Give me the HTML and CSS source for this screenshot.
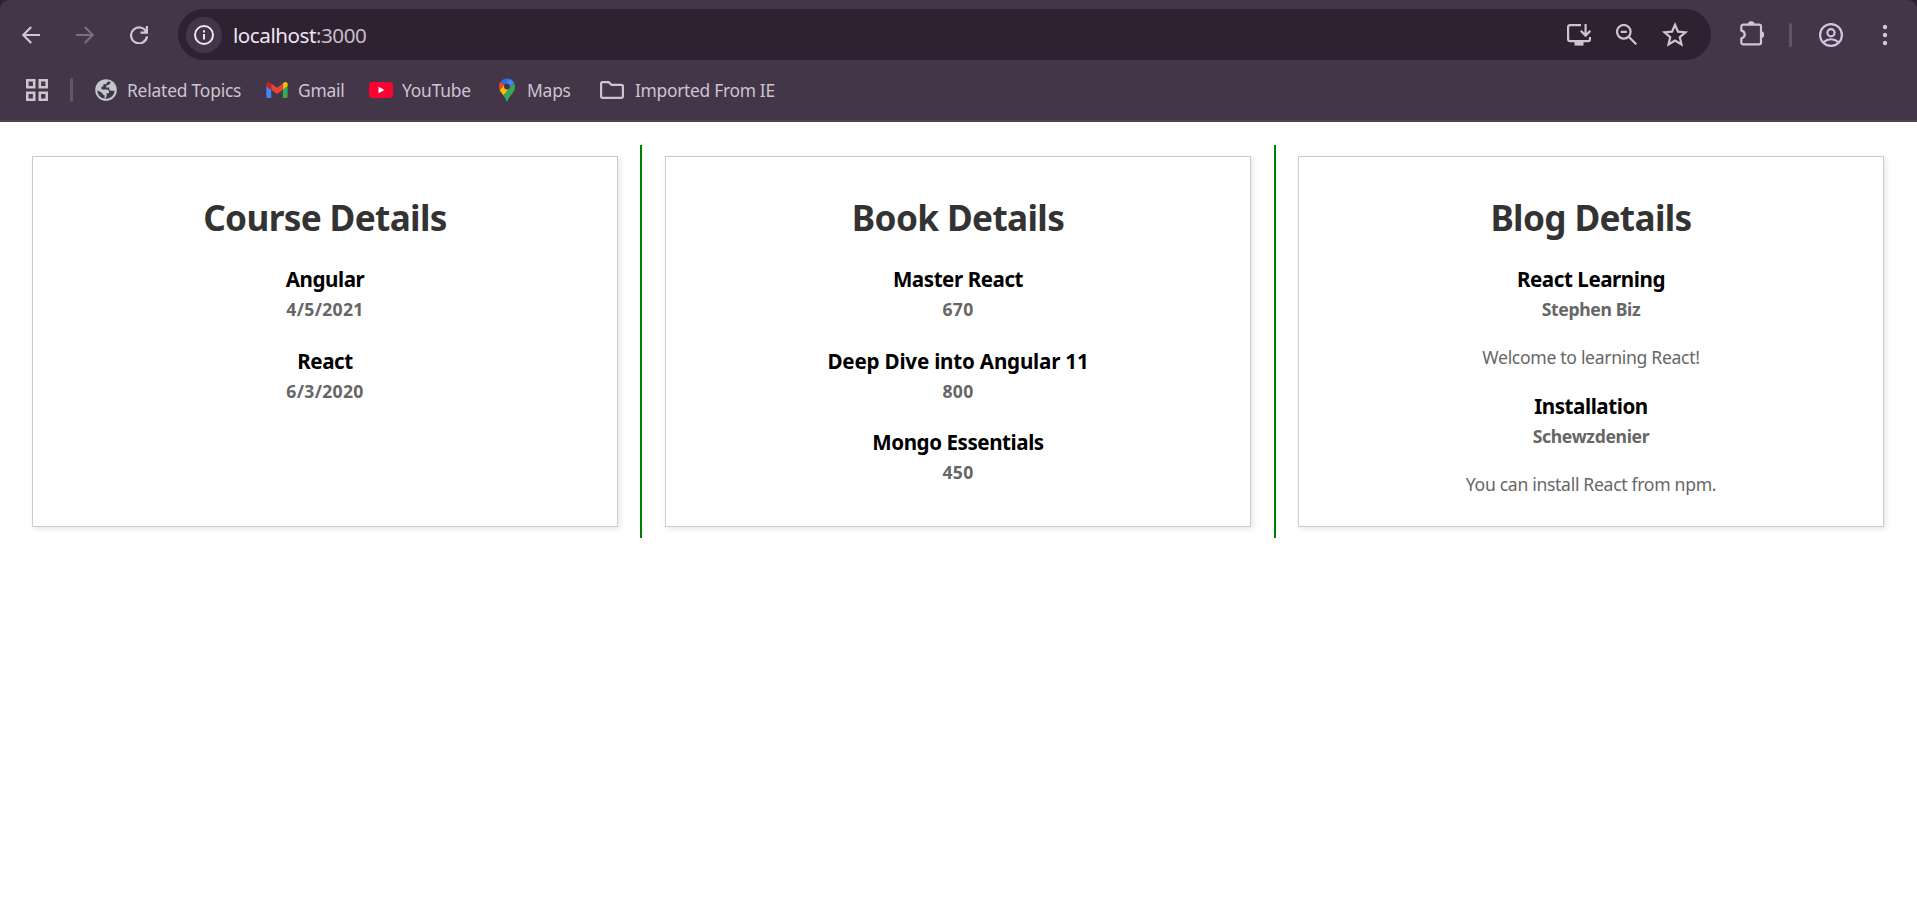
FILE: index.html
```html
<!DOCTYPE html>
<html lang="en">
<head>
<meta charset="utf-8">
<title>localhost:3000</title>
<link rel="stylesheet" href="styles.css">
</head>
<body>
<header class="browser">
  <div class="toolbar">
    <svg class="icon back" viewBox="0 0 18 18"><path d="M18 9H1.6M9.2 .9L1.2 9l8 8.1"/></svg>
    <svg class="icon forward" viewBox="0 0 18 18"><path d="M0 9h16.4M8.8 .9l8 8.1-8 8.1"/></svg>
    <svg class="icon reload" viewBox="0 0 18 18"><path d="M16.9 0v6.6h-6.4M16.3 6A8 8 0 1 0 17 10.4"/></svg>
    <div class="omnibox">
      <span class="site-info"><svg class="icon info" viewBox="0 0 20 20"><circle cx="10" cy="10" r="9"/><path d="M10 9v5.6M10 5.2v2.2"/></svg></span>
      <span class="url">localhost<span class="port">:3000</span></span>
      <svg class="icon install" viewBox="0 0 24 22"><path d="M14 1.2H3A2 2 0 0 0 1.1 3v12.2A2 2 0 0 0 3 17.1h18.2a1.9 1.9 0 0 0 1.8-1.9V13M18.6 0v11M13.8 6.8l4.8 4.8 4.8-4.8"/><path class="solid" d="M7.5 17h9v4.6h-9z"/></svg>
      <svg class="icon zoom" viewBox="0 0 21 21"><circle cx="7.8" cy="7.8" r="6.8"/><path d="M12.7 12.7l7.6 7.6M4.8 7.8h6"/></svg>
      <svg class="icon star" viewBox="0 0 24 24"><path d="M12 3.2l2.55 5.9 6.4.55-4.85 4.2 1.45 6.25L12 16.8l-5.55 3.3 1.45-6.25-4.85-4.2 6.4-.55z"/></svg>
    </div>
    <svg class="icon puzzle" viewBox="0 0 24 25"><path d="M3.2 3.7h15.9a1.9 1.9 0 0 1 1.9 1.9v15.9a1.9 1.9 0 0 1-1.9 1.9H3.2a1.9 1.9 0 0 1-1.9-1.9v-3.900c4.600-1.600 4.600-6.600 0-8.200V5.600a1.900 1.900 0 0 1 1.900-1.900z"/><path class="solid" d="M7.900 3.500a3.300 3.300 0 0 1 6.600 0zM21 10.300a3.300 3.300 0 0 1 0 6.600z"/></svg>
    <span class="divider toolbar-divider"></span>
    <svg class="icon profile" viewBox="0 0 24 24"><circle cx="12" cy="12" r="10.900"/><circle cx="12" cy="9.800" r="3.600"/><path d="M4.300 19.300c4.700-3.900 10.700-3.900 15.400 0"/></svg>
    <svg class="icon dots" viewBox="0 0 6 22"><circle cx="3" cy="3" r="2.200"/><circle cx="3" cy="11" r="2.200"/><circle cx="3" cy="19" r="2.200"/></svg>
  </div>
  <nav class="bookmarks">
    <svg class="icon apps" viewBox="0 0 22 22"><path d="M1.300 1.300h6.900v6.900H1.300zM13.800 1.300h6.900v6.900h-6.900zM1.300 13.800h6.900v6.900H1.300zM13.800 13.800h6.900v6.900h-6.900z"/></svg>
    <span class="divider bookmark-divider"></span>
    <svg class="globe" viewBox="0 0 22 22"><circle class="globe-disc" cx="11" cy="11" r="10.800"/><path class="globe-sea" d="M12.800 2.400L11 5.200H8.300v2.300l-1.800.3v2.700h5.300c1.300 0 2.200 1 2.200 2.200v1.500h-2.400v3.200l-1.500 2.200c3.500.4 5.800-1 7-2.300 1.500-1.500 2.300-3.600 2.400-5.600h-3.200c-1.300 0-2.100-.8-2.100-2V8.500h-3V6.800l3.400-1.600 1.200-2.100zM2.300 11.300c0 3.200 1.700 6 4.200 7.400l3.100.7v-3.200c-1.300 0-2.300-.8-2.300-2.100z"/></svg>
    <span class="label topics">Related Topics</span>
    <svg class="gmail" viewBox="52 42 88 66"><path fill="#4285f4" d="M58 108h14V74L52 59v43c0 3.320 2.690 6 6 6"/><path fill="#34a853" d="M120 108h14c3.320 0 6-2.690 6-6V59l-20 15"/><path fill="#fbbc04" d="M120 48v26l20-15v-8c0-7.420-8.470-11.650-14.400-7.200"/><path fill="#ea4335" d="M72 74V48l24 18 24-18v26L96 92"/><path fill="#c5221f" d="M52 51v8l20 15V48l-5.600-4.200c-5.940-4.450-14.400-.22-14.400 7.200"/></svg>
    <span class="label mail">Gmail</span>
    <svg class="youtube" viewBox="0 0 24 16"><rect width="24" height="16" rx="3.500" fill="#ff0033"/><path fill="#fff" d="M9.500 4.800l6 3.200-6 3.200z"/></svg>
    <span class="label video">YouTube</span>
    <svg class="maps" viewBox="0 0 92.300 132.300"><path fill="#1a73e8" d="M60.200 2.200C55.800.8 51 0 46.100 0 32 0 19.300 6.400 10.800 16.500l21.800 18.300z"/><path fill="#ea4335" d="M10.800 16.500C4.100 24.500 0 34.900 0 46.100c0 8.700 1.700 15.700 4.600 22l28-33.300z"/><path fill="#4285f4" d="M46.200 28.500c9.800 0 17.700 7.900 17.700 17.700 0 4.300-1.600 8.300-4.200 11.400 0 0 13.900-16.600 27.500-32.700-5.600-10.800-15.300-19-27-22.700L32.600 34.800c3.300-3.800 8.100-6.300 13.600-6.300"/><path fill="#fbbc04" d="M46.200 63.800c-9.800 0-17.700-7.900-17.700-17.700 0-4.300 1.500-8.300 4.100-11.300l-28 33.300c4.800 10.600 12.800 19.200 21 29.900l34.100-40.500c-3.300 3.900-8.100 6.300-13.500 6.300"/><path fill="#34a853" d="M59.100 109.200c15.400-24.100 33.300-35 33.300-63 0-7.700-1.900-14.900-5.200-21.300L25.600 98c2.600 3.400 5.300 7.300 7.900 11.300 9.400 14.500 6.800 23.100 12.800 23.100s3.400-8.700 12.800-23.200"/></svg>
    <span class="label map">Maps</span>
    <svg class="icon folder" viewBox="0 0 24 18"><path d="M2.600 1.100h6l3 2.700h9.800a1.500 1.500 0 0 1 1.500 1.500v10a1.500 1.500 0 0 1-1.500 1.500H2.600a1.500 1.500 0 0 1-1.500-1.500V2.600a1.500 1.500 0 0 1 1.500-1.500z"/></svg>
    <span class="label">Imported From IE</span>
  </nav>
</header>
<main class="columns">
  <section class="column">
    <div class="card">
      <h1 class="title">Course Details</h1>
      <div class="item"><h3 class="name">Angular</h3><h4 class="detail numeric">4/5/2021</h4></div>
      <div class="item"><h3 class="name">React</h3><h4 class="detail numeric">6/3/2020</h4></div>
    </div>
  </section>
  <section class="column ruled">
    <div class="card">
      <h1 class="title">Book Details</h1>
      <div class="item"><h3 class="name">Master React</h3><h4 class="detail numeric">670</h4></div>
      <div class="item"><h3 class="name long">Deep Dive into Angular 11</h3><h4 class="detail numeric">800</h4></div>
      <div class="item"><h3 class="name">Mongo Essentials</h3><h4 class="detail numeric">450</h4></div>
    </div>
  </section>
  <section class="column ruled">
    <div class="card">
      <h1 class="title">Blog Details</h1>
      <div class="item"><h3 class="name">React Learning</h3><h4 class="detail">Stephen Biz</h4><p class="text">Welcome to learning React!</p></div>
      <div class="item"><h3 class="name">Installation</h3><h4 class="detail">Schewzdenier</h4><p class="text">You can install React from npm.</p></div>
    </div>
  </section>
</main>
</body>
</html>
```
FILE: styles.css
```css
* { box-sizing: border-box; }
body { margin: 0; background: #fff; font-family: "Noto Sans", "Open Sans", sans-serif; }
html { background: #fff; }
svg { display: block; flex: none; }

/* Browser chrome */
.browser { height: 122px; background: #433649; border-bottom: 2px solid #49434d; border-radius: 9px 9px 0 0; box-shadow: 0 -9px 0 9px #2d2132; clip-path: inset(0); }
.toolbar { display: flex; align-items: center; height: 69px; padding-left: 22px; }
.icon { fill: none; stroke: #d5c2dc; stroke-width: 2.2; }
.icon .solid { fill: #d5c2dc; stroke: none; }
.back, .forward, .reload { width: 18px; height: 18px; }
.forward { margin-left: 36px; stroke: #7d6f83; }
.reload { margin-left: 36px; }
.omnibox { display: flex; align-items: center; width: 1533px; height: 51px; margin-left: 30px; padding-left: 8px; border-radius: 26px; background: #2d2132; }
.site-info { display: flex; align-items: center; justify-content: center; width: 36px; height: 36px; border-radius: 50%; background: #433649; }
.info { width: 20px; height: 20px; stroke: #ece5ee; stroke-width: 2; }
.url { flex: 1; margin-left: 11px; font-size: 20.6px; line-height: 28px; letter-spacing: -0.45px; color: #eee6f0; }
.port { color: #c9bfcc; }
.omnibox .install, .omnibox .zoom, .omnibox .star { stroke: #cfc5d0; }
.omnibox .install .solid { fill: #cfc5d0; }
.install { width: 24px; height: 22px; }
.zoom { width: 21px; height: 21px; margin-left: 25px; }
.star { width: 28px; height: 28px; margin: 0 22px 0 24px; stroke-width: 1.9; }
.puzzle { width: 24px; height: 25px; margin: 0 0 2px 29px; }
.divider { flex: none; width: 3px; height: 24px; border-radius: 2px; background: #62546a; }
.toolbar-divider { margin-left: 25px; }
.profile { width: 24px; height: 24px; margin-left: 27px; }
.dots { width: 6px; height: 22px; margin-left: 39px; }
.icon.dots { fill: #d5c2dc; stroke: none; }
.bookmarks { display: flex; align-items: center; height: 42px; padding-left: 26px; font-size: 17.4px; color: #cdc4d0; }
.apps { width: 22px; height: 22px; }
.icon.apps { stroke: #cdc4d0; stroke-width: 2.6; }
.bookmark-divider { margin: 0 22px; }
.globe { width: 22px; height: 22px; }
.globe-disc { fill: #c3c6ca; }
.globe-sea { fill: #433649; }
.label { margin-left: 10px; line-height: 24px; letter-spacing: -0.2px; white-space: nowrap; }
.topics { width: 139px; }
.gmail { width: 22px; height: 16px; }
.mail { width: 71px; }
.youtube { width: 24px; height: 16px; }
.video { width: 97px; margin-left: 9px; }
.maps { width: 16px; height: 24px; }
.map { width: 73px; margin-left: 12px; }
.folder { width: 24px; height: 18px; }
.icon.folder { stroke: #cdc4d0; }
.folder + .label { margin-left: 11px; letter-spacing: -0.3px; }

/* Page content */
.columns { display: grid; grid-template-columns: 630px 634px 632px; padding: 23px 0 0 10px; }
.column { height: 393px; padding: 11px 22px; }
.ruled { border-left: 2px solid green; }
.column:nth-child(2) { padding: 11px 23px; }
.card { height: 371px; padding: 36px 11px 0; border: 1px solid #ccc; box-shadow: 2px 2px 6px rgba(0, 0, 0, 0.1); text-align: center; }
.title { margin: 0 0 24px; font-size: 35.2px; line-height: 48px; letter-spacing: -0.65px; color: #333; }
.item { margin-bottom: 22.5px; }
.name { margin: 0; font-size: 20.6px; line-height: 28px; letter-spacing: -0.45px; color: #000; }
.long { letter-spacing: -0.2px; }
.detail { margin: 1px 0 0; font-size: 17.6px; line-height: 30px; letter-spacing: -0.35px; color: #666; }
.numeric { letter-spacing: 0.3px; }
.text { margin: 21px 0 0; font-size: 17.6px; line-height: 24px; letter-spacing: -0.32px; color: #666; }
```
